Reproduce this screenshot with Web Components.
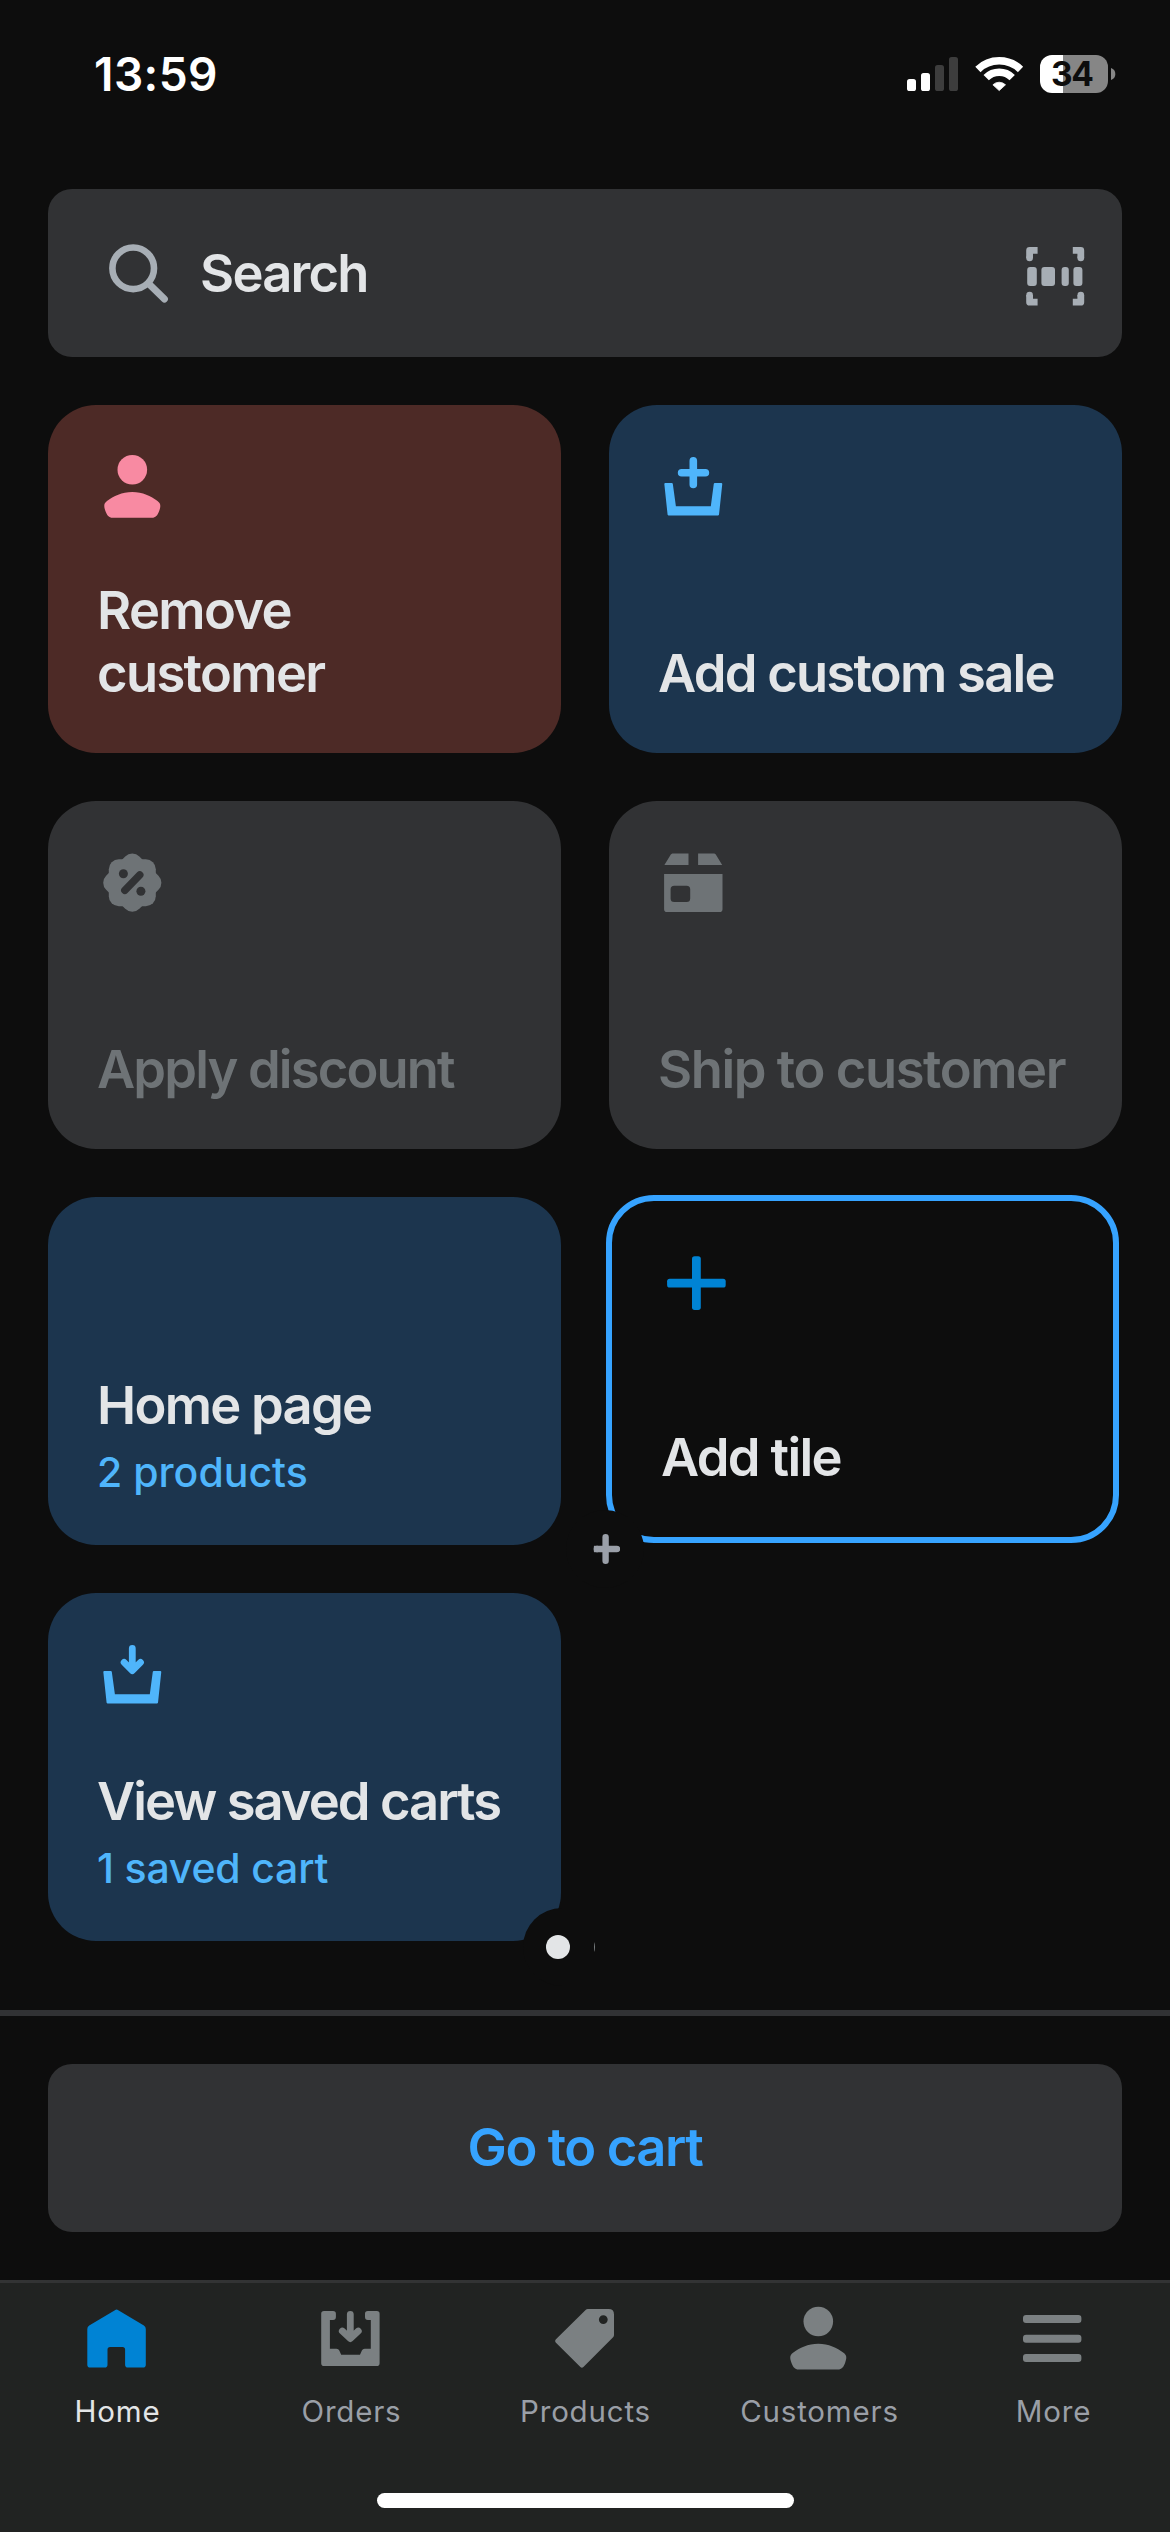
<!DOCTYPE html>
<html lang="en">
<head>
<meta charset="utf-8">
<title>Point of sale</title>
<style>
  html, body { margin: 0; padding: 0; background: #0d0d0d; }
  body { font-family: Inter, "Liberation Sans", sans-serif; color: #e3e5e7; }
</style>
</head>
<body>
<pos-app></pos-app>
<script>
const define = (name, html) => {
  const template = document.createElement('template');
  template.innerHTML = html;
  customElements.define(name, class extends HTMLElement {
    constructor() {
      super();
      this.attachShadow({ mode: 'open' }).append(template.content.cloneNode(true));
    }
  });
};

/* Icons, drawn on a 60 x 60 grid */
const PERSON = '<circle cx="30.3" cy="12.8" r="14.8"/><path d="M10.5 60.8C7 60.8 5 58.3 3.6 54.5C2 50 1.2 46.8 5 44C11.5 39 20 35 30.3 35S49 39 55.5 44C59.4 46.8 58.6 50 57 54.5C55.6 58.3 53.5 60.8 50 60.8Z"/>';
const BASKET = '<path d="M2 26H9.1L9.8 26.7L12.9 49.3H47.8L50.8 26.7L51.5 26H58.6L59.3 26.8L56 57.8L55.2 58.6H5.4L4.6 57.8L1.3 26.8Z"/>';
const ICONS = {
  person: ['1 0', PERSON],
  customers: ['1 -.7', PERSON],
  'basket-plus': ['1 0', BASKET + '<path d="M30.3 3.8V27.5M18.6 15.7H42.4" fill="none" stroke="currentColor" stroke-width="7.6" stroke-linecap="round"/>'],
  'basket-down': ['1 0', BASKET + '<path d="M30.3 3.4V24M22.1 17.4L30.3 25.6L38.5 17.4" fill="none" stroke="currentColor" stroke-width="6.8" stroke-linecap="round" stroke-linejoin="round"/>'],
  discount: ['1 0', '<rect x="6.8" y="6.2" width="47" height="47" rx="10"/><rect x="6.8" y="6.2" width="47" height="47" rx="10" transform="rotate(45 30.3 29.7)"/><g fill="#313234"><circle cx="21.4" cy="20.7" r="4.5"/><circle cx="38.9" cy="38.2" r="4.5"/></g><path d="M37.8 21.9L22.8 37.4" stroke="#313234" stroke-width="7.4" stroke-linecap="round"/>'],
  box: ['1 0', '<path d="M1.4 12L7.2 2.4C8 1 8.8 .4 10.4 .4H25.5V12ZM35.1 .4H50.3C51.8 .4 52.7 1 53.4 2.4L59.2 12H35.1Z"/><path fill-rule="evenodd" d="M1.1 21H59.5V56.2Q59.5 59 56.7 59H3.9Q1.1 59 1.1 56.2ZM11.2 32.8Q7.6 32.8 7.6 36.3V45.4Q7.6 48.9 11.2 48.9H23.6Q27.2 48.9 27.2 45.4V36.3Q27.2 32.8 23.6 32.8Z"/>'],
  plus: ['1 0', '<rect x="1.1" y="25.7" width="58.6" height="8.8" rx="2.6"/><rect x="26" y="3.2" width="8.8" height="53.7" rx="2.6"/>'],
  home: ['0 0', '<path d="M27.9 2.2Q29.6 .9 31.3 2.2L56.9 17.6Q58.8 18.9 58.8 21V56.8Q58.8 59.6 56 59.6H40.9Q38.1 59.6 38.1 56.8V41.6Q38.1 39 35.5 39H23.1Q20.5 39 20.5 41.6V56.8Q20.5 59.6 17.7 59.6H3.1Q.3 59.6 .3 56.8V21Q.3 18.9 2.2 17.6Z"/>'],
  orders: ['0 0', '<path d="M3 3H12Q14.9 3 14.9 5.8V9Q14.9 11.9 12 11.9H8.9V40.7H15.5Q17.5 40.7 18.3 42.6L20.2 46.8H39L40.9 42.6Q41.7 40.7 43.7 40.7H49.8V11.9H46.9Q44 11.9 44 9V5.8Q44 3 46.9 3H55.8Q58.6 3 58.6 5.8V55.2Q58.6 58 55.8 58H3Q.2 58 .2 55.2V5.8Q.2 3 3 3Z"/><path d="M29.3 6.3V29M21.3 23L29.3 30.6L37.3 23" fill="none" stroke="currentColor" stroke-width="6.8" stroke-linecap="round" stroke-linejoin="round"/>'],
  tag: ['0 0', '<path fill-rule="evenodd" d="M30.6 1.9Q31.5 1 32.8 1H53.6Q59 1 59 6.4V27Q59 28.3 58.1 29.2L28.4 59Q26.9 60.4 25.4 59L.7 34.4Q-.6 33 .7 31.6ZM48.3 7.2A4.4 4.4 0 1 0 48.3 16A4.4 4.4 0 1 0 48.3 7.2Z"/>'],
  more: ['0 0', '<rect x="0" y="7" width="58.4" height="8" rx="3"/><rect x="0" y="26.7" width="58.4" height="8" rx="3"/><rect x="0" y="46" width="58.4" height="8" rx="3"/>'],
  search: ['0 0', '<circle cx="24.2" cy="24.3" r="20.8" fill="none" stroke="currentColor" stroke-width="6.6"/><path d="M40 40L55.4 55" stroke="currentColor" stroke-width="7" stroke-linecap="round"/>'],
  scan: ['0 0', '<g fill="none" stroke="currentColor" stroke-width="6.8" stroke-linejoin="round"><path d="M3.6 11.2V3.4H11.6"/><path d="M46.8 3.4H54.8V11.2"/><path d="M3.6 48V55.2H11.6"/><path d="M54.8 48V55.2H46.8"/></g><g><circle cx="3.6" cy="11" r="3.3"/><circle cx="54.8" cy="11" r="3.3"/><circle cx="3.6" cy="48" r="3.3"/><circle cx="54.8" cy="48" r="3.3"/></g><rect x="1.2" y="20" width="9.6" height="19" rx="3"/><rect x="15.4" y="20" width="13.6" height="19" rx="3"/><rect x="35.6" y="20" width="7.2" height="19" rx="3"/><rect x="47.4" y="20" width="9" height="19" rx="3"/>']
};
customElements.define('pos-icon', class extends HTMLElement {
  constructor() {
    super();
    this.attachShadow({ mode: 'open' });
  }
  connectedCallback() {
    const [origin, shapes] = ICONS[this.getAttribute('name')];
    this.shadowRoot.innerHTML = `<style>:host{display:block;width:60px;height:60px;flex:none}svg{display:block;overflow:visible}</style>
      <svg width="60" height="60" viewBox="${origin} 60 60" fill="currentColor">${shapes}</svg>`;
  }
});

define('status-bar', `
  <style>
    :host { display: flex; justify-content: space-between; align-items: flex-start; height: 189px; padding: 0 54px 0 94px; box-sizing: border-box; color: #fff; }
    .time { font-size: 46px; font-weight: 600; line-height: 56px; letter-spacing: .45px; margin-top: 46px; }
    .signs { display: flex; align-items: flex-start; margin-top: 55px; }
    .bars { margin-right: 17px; }
    .wifi { margin-right: 16.5px; }
    .battery { width: 68px; height: 38px; border-radius: 12px; background: linear-gradient(90deg, #fff 23px, #868686 23px); color: #0d0d0d; font-size: 33.5px; font-weight: 700; letter-spacing: -1.3px; line-height: 38px; text-indent: 11px; }
    .cap { margin: 13px 0 0 3px; }
  </style>
  <div class="time">13:59</div>
  <div class="signs">
    <svg class="bars" width="51" height="37"><g fill="#fff"><rect y="24" width="9" height="12" rx="2.6"/><rect x="14" y="18" width="9" height="18" rx="2.6"/></g><g fill="#3d3d3d"><rect x="28" y="10" width="9" height="26" rx="2.6"/><rect x="42" y="2" width="9" height="34" rx="2.6"/></g></svg>
    <svg class="wifi" width="48.5" height="37" fill="none" stroke="#fff"><path d="M2.9 14.4A30.7 30.7 0 0 1 45.5 14.4" stroke-width="7.6"/><path d="M11.2 22.6A18.5 18.5 0 0 1 37.2 22.6" stroke-width="7.6"/><path d="M24.2 35.6L17.9 29.8A9 9 0 0 1 30.5 29.8Z" fill="#fff" stroke-width=".8" stroke-linejoin="round"/></svg>
    <div class="battery">34</div>
    <svg class="cap" width="5" height="12"><path d="M0 0C5.8 1.6 5.8 10.4 0 12Z" fill="#868686"/></svg>
  </div>`);

define('search-field', `
  <style>
    :host { display: flex; align-items: center; height: 168px; box-sizing: border-box; border-radius: 24px; background: #313234; padding: 0 36px 0 61px; color: #a7aeb5; }
    .icon { margin-top: 2px; }
    .label { flex: 1; margin-left: 31px; margin-top: 1px; color: #e3e5e7; font-size: 52.5px; font-weight: 600; letter-spacing: -1.75px; line-height: 63px; }
    .scan { margin-top: 8px; }
  </style>
  <pos-icon class="icon" name="search"></pos-icon>
  <div class="label"><slot></slot></div>
  <pos-icon class="scan" name="scan"></pos-icon>`);

define('pos-tile', `
  <style>
    :host { display: flex; flex-direction: column; justify-content: space-between; height: 348px; box-sizing: border-box; padding: 52px 24px 48px 49px; border-radius: 48px; background: #1c354e; --icon: #4fb5fb; }
    :host([tone="critical"]) { background: #4d2a26; --icon: #f88aa2; }
    :host([tone="disabled"]) { background: #313234; --icon: #6e7376; color: #6e7376; }
    :host([tone="outline"]) { background: none; border: 6px solid #36a3ff; --icon: #0083d4; margin: -2px 3px 2px -3px; }
    .icon { height: 60px; margin-left: 6px; color: var(--icon); }
    .text { display: flex; flex-direction: column; }
    .title { font-size: 52.5px; font-weight: 600; line-height: 63px; letter-spacing: var(--track, -1.7px); }
    ::slotted([slot="note"]) { margin-top: 10px; color: #4fb5fb; font-size: 41px; font-weight: 450; line-height: 50px; }
  </style>
  <div class="icon"><slot name="icon"></slot></div>
  <div class="text">
    <div class="title"><slot></slot></div>
    <slot name="note"></slot>
  </div>`);

define('page-pill', `
  <style>
    :host { position: absolute; display: flex; align-items: center; width: 71.6px; height: 78px; box-sizing: border-box; border-radius: 39px 0 0 39px; padding-left: 23px; gap: 24px; overflow: hidden; background: #0d0d0d; }
    i { flex: none; width: 24px; height: 24px; border-radius: 50%; background: #e3e5e7; }
    i + i { background: #7b8082; }
  </style>
  <i></i><i></i>`);

define('add-page', `
  <style>
    :host { position: absolute; display: flex; align-items: center; justify-content: center; width: 78px; height: 78px; border-radius: 50%; background: #0d0d0d; }
  </style>
  <svg width="30" height="30" fill="none" stroke="#9a9fa8" stroke-width="6.4" stroke-linecap="round"><path d="M15.6 3.2V26.8"/><path d="M6.8 15H27"/><path d="M3.9 15H8" stroke-linecap="butt"/></svg>`);

define('tile-grid', `
  <style>
    :host { position: relative; display: grid; grid-template-columns: 1fr 1fr; gap: 48px; padding: 48px 48px 69px; }
    page-pill { left: 523px; top: 1551px; }
    add-page { left: 566px; top: 1153px; }
  </style>
  <slot></slot>
  <add-page></add-page>
  <page-pill></page-pill>`);

define('cart-button', `
  <style>
    :host { display: block; border-top: 6px solid #313234; padding: 48px; }
    button { display: block; width: 100%; height: 168px; border: 0; border-radius: 24px; background: #313234; color: #36a3ff; font: 600 52.5px/63px Inter, "Liberation Sans", sans-serif; letter-spacing: -1.45px; padding: 0 0 1px; }
  </style>
  <button><slot></slot></button>`);

define('tab-item', `
  <style>
    :host { display: flex; flex: 1; flex-direction: column; align-items: center; padding-top: 25px; color: #7b8082; }
    .label { margin-top: 25px; font-size: 29.5px; line-height: 36px; letter-spacing: .8px; margin-right: -1px; color: #9a9fa7; }
    :host([active]) { color: #0083d4; }
    :host([active]) .label { color: #e3e5e7; }
  </style>
  <slot name="icon"></slot>
  <div class="label"><slot></slot></div>`);

define('tab-bar', `
  <style>
    :host { display: flex; flex-direction: column; height: 252px; box-sizing: border-box; border-top: 3px solid #323334; background: #212322; }
    .tabs { display: flex; height: 210px; }
    .grip { align-self: center; width: 417px; height: 15px; border-radius: 8px; background: #fff; }
  </style>
  <div class="tabs"><slot></slot></div>
  <div class="grip"></div>`);

define('pos-app', `
  <style>:host { display: block; width: 1170px; height: 2532px; overflow: hidden; background: #0d0d0d; } search-field { margin: 0 48px; }</style>
  <status-bar></status-bar>
  <search-field>Search</search-field>
  <tile-grid>
    <pos-tile tone="critical" style="--track:-1.65px"><pos-icon slot="icon" name="person"></pos-icon>Remove<br>customer</pos-tile>
    <pos-tile style="--track:-1.74px"><pos-icon slot="icon" name="basket-plus"></pos-icon>Add custom sale</pos-tile>
    <pos-tile tone="disabled" style="--track:-1.85px"><pos-icon slot="icon" name="discount"></pos-icon>Apply discount</pos-tile>
    <pos-tile tone="disabled" style="--track:-1.43px"><pos-icon slot="icon" name="box"></pos-icon>Ship to customer</pos-tile>
    <pos-tile style="--track:-1.74px">Home page<span slot="note">2 products</span></pos-tile>
    <pos-tile tone="outline" style="--track:-1.65px"><pos-icon slot="icon" name="plus"></pos-icon>Add tile</pos-tile>
    <pos-tile style="--track:-1.96px"><pos-icon slot="icon" name="basket-down"></pos-icon>View saved carts<span slot="note" style="letter-spacing:-.2px">1 saved cart</span></pos-tile>
  </tile-grid>
  <cart-button>Go to cart</cart-button>
  <tab-bar>
    <tab-item active><pos-icon slot="icon" name="home"></pos-icon>Home</tab-item>
    <tab-item><pos-icon slot="icon" name="orders"></pos-icon>Orders</tab-item>
    <tab-item><pos-icon slot="icon" name="tag"></pos-icon>Products</tab-item>
    <tab-item><pos-icon slot="icon" name="customers"></pos-icon>Customers</tab-item>
    <tab-item><pos-icon slot="icon" name="more"></pos-icon>More</tab-item>
  </tab-bar>`);
</script>
</body>
</html>
